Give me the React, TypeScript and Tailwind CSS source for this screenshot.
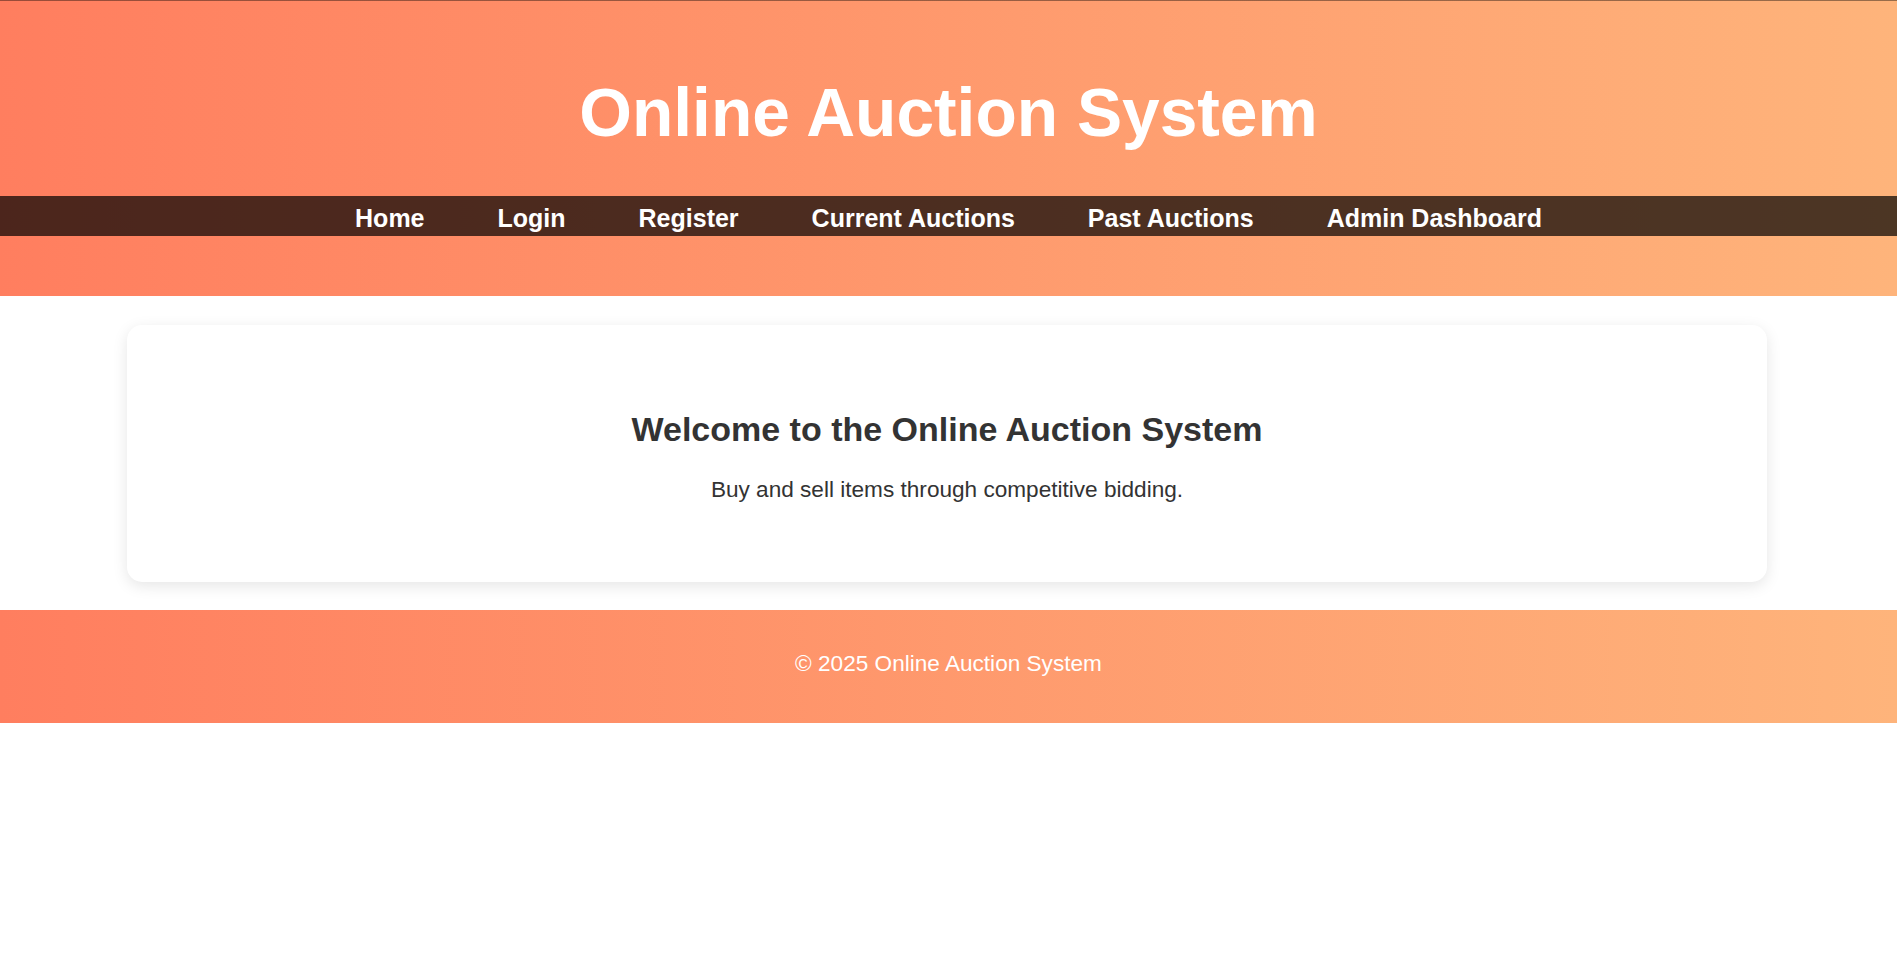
export default function App() {
  const links = ["Home", "Login", "Register", "Current Auctions", "Past Auctions", "Admin Dashboard"];

  return (
    <div className="min-h-screen bg-white text-[22.6px] text-[#333]" style={{ fontFamily: '"Liberation Sans", Arial, sans-serif' }}>
      <header className="border-t border-black/40 bg-[linear-gradient(to_right,#ff7e5f,#feb47b)] pt-[73px] pb-[60px] text-white">
        <h1 className="text-center text-[67.7px] font-bold leading-[77px]">Online Auction System</h1>
        <nav className="mt-[45px] flex h-[40px] items-center justify-center gap-[73px] bg-black/70 pt-[6px]">
          {links.map((link) => (
            <a key={link} href="#" className="text-[25px] font-bold text-white">
              {link}
            </a>
          ))}
        </nav>
      </header>

      <main className="pt-[29px] pb-[28px]">
        <div className="ml-[127px] mr-[130px] rounded-[15px] bg-white pt-[85px] pb-[80px] text-center shadow-[0_4px_15px_rgba(0,0,0,0.1)]">
          <h2 className="text-[34px] font-bold leading-[38.6px] text-[#333]">Welcome to the Online Auction System</h2>
          <p className="mt-[28px] leading-[25.7px] text-[#333]">Buy and sell items through competitive bidding.</p>
        </div>
      </main>

      <footer className="bg-[linear-gradient(to_right,#ff7e5f,#feb47b)] pt-[41px] pb-[46px] text-center text-white">
        <p className="leading-[25.7px]">© 2025 Online Auction System</p>
      </footer>
    </div>
  );
}
